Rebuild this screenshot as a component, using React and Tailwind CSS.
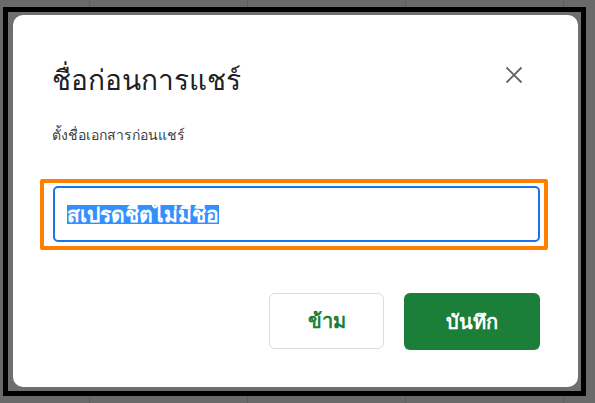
import React from 'react';

const App = () => {
  return (
    <div
      className="w-[595px] h-[403px] overflow-hidden bg-[#6a6a6a] pt-[7px] pl-[3px] bg-[repeating-linear-gradient(90deg,transparent_0,transparent_89px,#5e5e5e_89px,#5e5e5e_90px,transparent_90px,transparent_158px)]"
      style={{ fontFamily: '"Noto Sans", "Liberation Sans", sans-serif' }}
    >
      <div className="w-[583px] h-[389px] border-[5px] border-black bg-[#6f6f6f] pl-[5px] pt-[3px]">
        <div className="w-[565px] h-[372px] bg-white rounded-[10px] flex flex-col">
          <div className="flex items-start justify-between pl-[39px] pr-[55px] pt-[46px]">
            <h1 className="text-[28px] leading-[36px] text-[#202124]">ชื่อก่อนการแชร์</h1>
            <button className="text-[#5f6368] mt-[5px]" title="Close">
              <svg width="18" height="18" viewBox="0 0 18 18" fill="none" stroke="currentColor" strokeWidth="1.8">
                <path d="M1.5 1.5 L16.5 16.5 M16.5 1.5 L1.5 16.5" />
              </svg>
            </button>
          </div>
          <p className="pl-[39px] mt-[28px] text-[14px] leading-[20px] text-[#3c4043]">ตั้งชื่อเอกสารก่อนแชร์</p>
          <div className="ml-[27px] mt-[34px] w-[508px] h-[71px] border-[4px] border-[#ff7f00] rounded-[2px] pl-[9px] pt-[3px] pr-[4px] pb-[4px]">
            <div className="h-full rounded-[5px] border-2 border-[#1a73e8] flex items-center pl-[12px]">
              <span className="bg-[#3390ff] text-white font-bold text-[21px] leading-[19px] h-[19px] flex items-center">
                สเปรดชีตไม่มีชื่อ
              </span>
            </div>
          </div>
          <div className="flex justify-end gap-[20px] pr-[38px] mt-[43px]">
            <button className="w-[115px] h-[56px] rounded-[6px] border border-[#dadce0] bg-white text-[#188038] font-bold text-[20px]">
              ข้าม
            </button>
            <button className="w-[136px] h-[57px] rounded-[6px] bg-[#1b7f3a] text-white font-bold text-[20px]">
              บันทึก
            </button>
          </div>
        </div>
      </div>
    </div>
  );
};

export default App;
